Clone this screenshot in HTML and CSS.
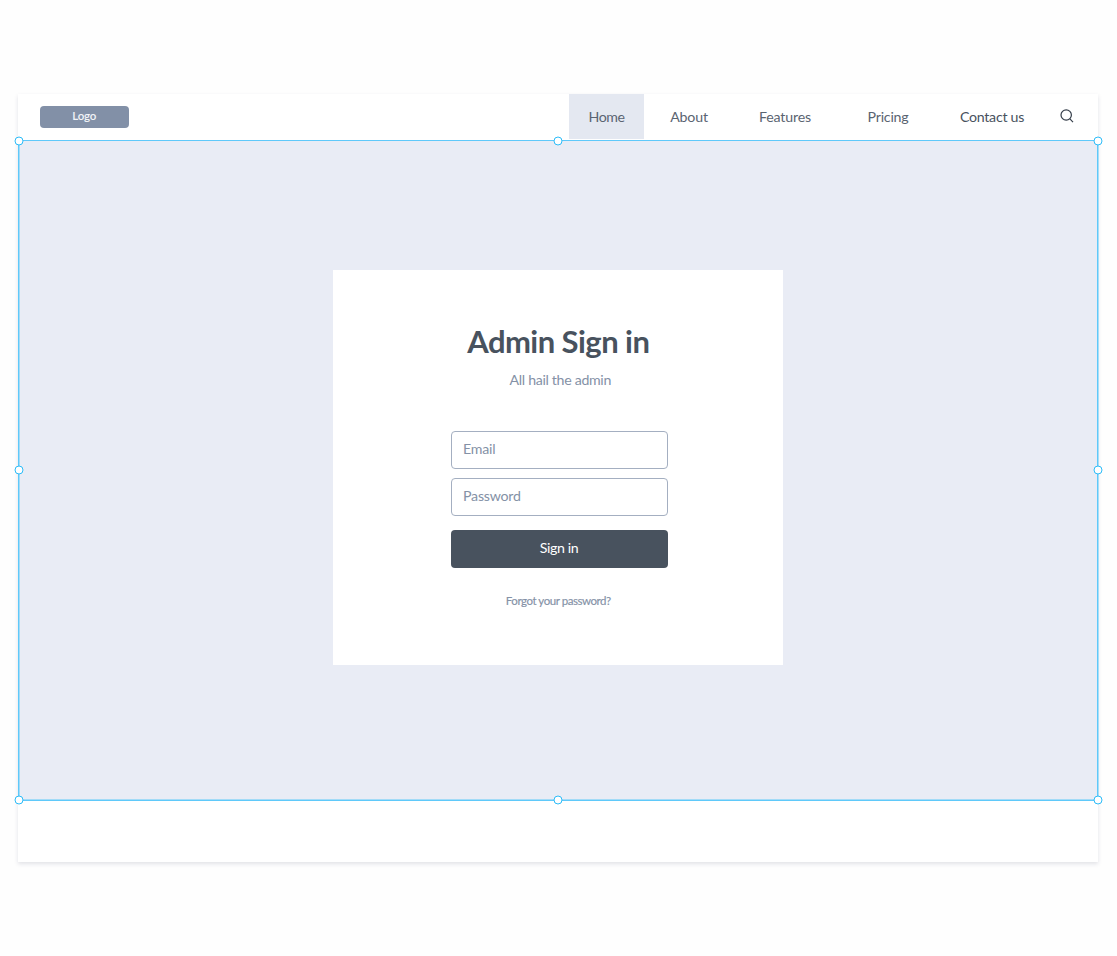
FILE: index.html
```html
<!DOCTYPE html>
<html lang="en">
<head>
<meta charset="utf-8">
<title>Admin Sign in</title>
<link rel="stylesheet" href="styles.css">
</head>
<body>
<div class="frame">
  <header class="header">
    <div class="logo"><span>Logo</span></div>
    <nav class="nav">
      <a class="nav-item active"><span>Home</span></a>
      <a class="nav-item"><span>About</span></a>
      <a class="nav-item"><span>Features</span></a>
      <a class="nav-item"><span>Pricing</span></a>
      <a class="nav-item contact"><span>Contact us</span></a>
      <a class="nav-item"><svg class="search" viewBox="0 0 14 14" width="14" height="14"><circle cx="6.2" cy="6" r="5.2"/><path d="M9.9 9.9 13 13.1"/></svg></a>
    </nav>
  </header>
  <main class="stage">
    <form class="card">
      <h1 class="title"><span>Admin Sign in</span></h1>
      <p class="subtitle"><span>All hail the admin</span></p>
      <div class="field"><span>Email</span></div>
      <div class="field"><span>Password</span></div>
      <div class="button"><span>Sign in</span></div>
      <a class="forgot"><span>Forgot your password?</span></a>
    </form>
    <i class="handle top left"></i><i class="handle top center"></i><i class="handle top right"></i>
    <i class="handle middle left"></i><i class="handle middle right"></i>
    <i class="handle bottom left"></i><i class="handle bottom center"></i><i class="handle bottom right"></i>
  </main>
</div>
</body>
</html>
```
FILE: styles.css
```css
* { box-sizing: border-box; }
body { margin: 0; padding: 94px 18px; background: #fefefe; font-family: Lato, sans-serif; font-size: 14.2px; color: #48525e; }
.frame { width: 1080px; height: 768px; background: #fff; box-shadow: 0 2px 4px rgba(50, 60, 90, .14); }
.header { display: flex; justify-content: space-between; height: 46px; padding: 0 8px 0 22px; }
.logo { width: 88.5px; height: 22.5px; margin-top: 11.5px; border-radius: 4px; background: #8290a7; color: #f1f3f7; font-size: 11.5px; font-weight: 600; line-height: 20px; letter-spacing: -.2px; text-align: center; }
.nav { display: grid; grid-template-columns: 75px 90px 102px 104px 104px 46px; height: 45px; }
.nav-item { display: flex; align-items: center; justify-content: center; letter-spacing: -.2px; color: #5a6471; }
.active { background: #e4e8f1; letter-spacing: -.45px; }
.contact { color: #48525e; letter-spacing: -.28px; }
.search { margin-bottom: 1px; fill: none; stroke: #343d49; stroke-width: 1.2; }
.stage { position: relative; display: flex; justify-content: center; height: 661px; padding: 129px 0 0; border: 1px solid #5fc9fa; background: #e9ecf5; box-shadow: inset .5px -.5px 0 #5fc9fa, .5px 0 0 #5fc9fa; }
.card { display: flex; flex-direction: column; align-items: center; width: 450px; height: 395px; margin-right: .4px; padding: 52px 0 0 1px; background: #fff; }
.title { margin: 0; font-size: 31px; line-height: 38px; font-weight: 700; letter-spacing: -.55px; }
.subtitle { margin: 10px 0 40.5px 4px; line-height: 20px; letter-spacing: -.33px; color: #8491a6; }
.field { width: 216.5px; height: 38.5px; margin: 0 0 8.5px 2px; padding-left: 11px; border: 1px solid #a4afc1; border-radius: 4px; line-height: 34.5px; letter-spacing: -.25px; color: #8491a6; }
.button { width: 216.5px; height: 37.5px; margin: 5.5px 0 0 2.5px; border-radius: 4px; background: #48525e; color: #fff; line-height: 36px; text-align: center; letter-spacing: -.38px; text-indent: -1px; }
.forgot { margin-top: 25.5px; font-size: 11.5px; line-height: 16px; letter-spacing: -.45px; color: #8491a6; -webkit-text-stroke: .15px currentColor; }
.handle { position: absolute; width: 9px; height: 9px; border: 1.3px solid #2dbcf8; border-radius: 50%; background: #fff; transform: translate(-50%, -50%); }
.top { top: -.4px; }
.middle { top: calc(50% - .3px); }
.bottom { top: 100%; }
.left { left: -.5px; }
.center { left: 50%; }
.right { left: calc(100% + .5px); }
```
